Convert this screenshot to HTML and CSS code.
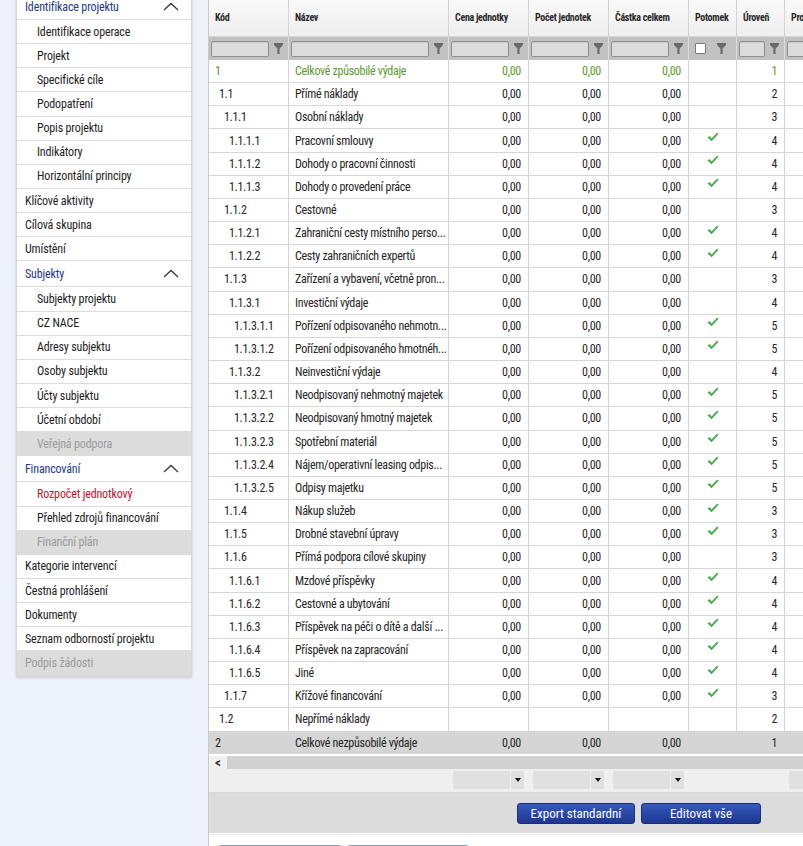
FILE: index.html
```html
<!DOCTYPE html>
<html lang="cs">
<head>
<meta charset="utf-8">
<title>Rozpočet jednotkový</title>
<link rel="stylesheet" href="styles.css">
</head>
<body>
<div class="layout">
  <nav class="side">
    <div class="item head">Identifikace projektu<svg class="chev" viewBox="0 0 16 9"><path d="M1 8L8 1.5L15 8"/></svg></div>
    <div class="item sub">Identifikace operace</div>
    <div class="item sub">Projekt</div>
    <div class="item sub">Specifické cíle</div>
    <div class="item sub">Podopatření</div>
    <div class="item sub">Popis projektu</div>
    <div class="item sub">Indikátory</div>
    <div class="item sub">Horizontální principy</div>
    <div class="item">Klíčové aktivity</div>
    <div class="item">Cílová skupina</div>
    <div class="item">Umístění</div>
    <div class="item head">Subjekty<svg class="chev" viewBox="0 0 16 9"><path d="M1 8L8 1.5L15 8"/></svg></div>
    <div class="item sub">Subjekty projektu</div>
    <div class="item sub">CZ NACE</div>
    <div class="item sub">Adresy subjektu</div>
    <div class="item sub">Osoby subjektu</div>
    <div class="item sub">Účty subjektu</div>
    <div class="item sub">Účetní období</div>
    <div class="item sub disabled">Veřejná podpora</div>
    <div class="item head">Financování<svg class="chev" viewBox="0 0 16 9"><path d="M1 8L8 1.5L15 8"/></svg></div>
    <div class="item sub active">Rozpočet jednotkový</div>
    <div class="item sub">Přehled zdrojů financování</div>
    <div class="item sub disabled">Finanční plán</div>
    <div class="item">Kategorie intervencí</div>
    <div class="item">Čestná prohlášení</div>
    <div class="item">Dokumenty</div>
    <div class="item">Seznam odborností projektu</div>
    <div class="item disabled">Podpis žádosti</div>
  </nav>

  <main class="main">
    <div class="row hdr">
      <div class="c">Kód</div><div class="c">Název</div><div class="c">Cena jednotky</div><div class="c">Počet jednotek</div><div class="c">Částka celkem</div><div class="c">Potomek</div><div class="c">Úroveň</div><div class="c">Pro</div><div class="c"></div>
    </div>
    <div class="row flt">
      <div class="c"><span class="inp"></span><svg class="fun" viewBox="0 0 10 12"><path d="M0 0H10V2.2L6.2 6V12H3.8V6L0 2.2Z"/></svg></div>
      <div class="c"><span class="inp"></span><svg class="fun" viewBox="0 0 10 12"><path d="M0 0H10V2.2L6.2 6V12H3.8V6L0 2.2Z"/></svg></div>
      <div class="c"><span class="inp"></span><svg class="fun" viewBox="0 0 10 12"><path d="M0 0H10V2.2L6.2 6V12H3.8V6L0 2.2Z"/></svg></div>
      <div class="c"><span class="inp"></span><svg class="fun" viewBox="0 0 10 12"><path d="M0 0H10V2.2L6.2 6V12H3.8V6L0 2.2Z"/></svg></div>
      <div class="c"><span class="inp"></span><svg class="fun" viewBox="0 0 10 12"><path d="M0 0H10V2.2L6.2 6V12H3.8V6L0 2.2Z"/></svg></div>
      <div class="c chk"><span class="box"></span><svg class="fun" viewBox="0 0 10 12"><path d="M0 0H10V2.2L6.2 6V12H3.8V6L0 2.2Z"/></svg></div>
      <div class="c"><span class="inp"></span><svg class="fun" viewBox="0 0 10 12"><path d="M0 0H10V2.2L6.2 6V12H3.8V6L0 2.2Z"/></svg></div>
      <div class="c"><span class="inp"></span><svg class="fun" viewBox="0 0 10 12"><path d="M0 0H10V2.2L6.2 6V12H3.8V6L0 2.2Z"/></svg></div>
      <div class="c"></div>
    </div>

    <div class="row d green"><div class="c code l1">1</div><div class="c">Celkové způsobilé výdaje</div><div class="c n">0,00</div><div class="c n">0,00</div><div class="c n">0,00</div><div class="c"></div><div class="c n">1</div><div class="c"></div><div class="c"></div></div>
    <div class="row d"><div class="c code l2">1.1</div><div class="c">Přímé náklady</div><div class="c n">0,00</div><div class="c n">0,00</div><div class="c n">0,00</div><div class="c"></div><div class="c n">2</div><div class="c"></div><div class="c"></div></div>
    <div class="row d"><div class="c code l3">1.1.1</div><div class="c">Osobní náklady</div><div class="c n">0,00</div><div class="c n">0,00</div><div class="c n">0,00</div><div class="c"></div><div class="c n">3</div><div class="c"></div><div class="c"></div></div>
    <div class="row d"><div class="c code l4">1.1.1.1</div><div class="c">Pracovní smlouvy</div><div class="c n">0,00</div><div class="c n">0,00</div><div class="c n">0,00</div><div class="c"><svg class="ok" viewBox="0 0 12 10"><path d="M0.5 5.5L2.5 4L4.6 6.4L10.2 0.5L11.5 1.8L4.6 9.3Z"/></svg></div><div class="c n">4</div><div class="c"></div><div class="c"></div></div>
    <div class="row d"><div class="c code l4">1.1.1.2</div><div class="c">Dohody o pracovní činnosti</div><div class="c n">0,00</div><div class="c n">0,00</div><div class="c n">0,00</div><div class="c"><svg class="ok" viewBox="0 0 12 10"><path d="M0.5 5.5L2.5 4L4.6 6.4L10.2 0.5L11.5 1.8L4.6 9.3Z"/></svg></div><div class="c n">4</div><div class="c"></div><div class="c"></div></div>
    <div class="row d"><div class="c code l4">1.1.1.3</div><div class="c">Dohody o provedení práce</div><div class="c n">0,00</div><div class="c n">0,00</div><div class="c n">0,00</div><div class="c"><svg class="ok" viewBox="0 0 12 10"><path d="M0.5 5.5L2.5 4L4.6 6.4L10.2 0.5L11.5 1.8L4.6 9.3Z"/></svg></div><div class="c n">4</div><div class="c"></div><div class="c"></div></div>
    <div class="row d"><div class="c code l3">1.1.2</div><div class="c">Cestovné</div><div class="c n">0,00</div><div class="c n">0,00</div><div class="c n">0,00</div><div class="c"></div><div class="c n">3</div><div class="c"></div><div class="c"></div></div>
    <div class="row d"><div class="c code l4">1.1.2.1</div><div class="c">Zahraniční cesty místního perso...</div><div class="c n">0,00</div><div class="c n">0,00</div><div class="c n">0,00</div><div class="c"><svg class="ok" viewBox="0 0 12 10"><path d="M0.5 5.5L2.5 4L4.6 6.4L10.2 0.5L11.5 1.8L4.6 9.3Z"/></svg></div><div class="c n">4</div><div class="c"></div><div class="c"></div></div>
    <div class="row d"><div class="c code l4">1.1.2.2</div><div class="c">Cesty zahraničních expertů</div><div class="c n">0,00</div><div class="c n">0,00</div><div class="c n">0,00</div><div class="c"><svg class="ok" viewBox="0 0 12 10"><path d="M0.5 5.5L2.5 4L4.6 6.4L10.2 0.5L11.5 1.8L4.6 9.3Z"/></svg></div><div class="c n">4</div><div class="c"></div><div class="c"></div></div>
    <div class="row d"><div class="c code l3">1.1.3</div><div class="c">Zařízení a vybavení, včetně pron...</div><div class="c n">0,00</div><div class="c n">0,00</div><div class="c n">0,00</div><div class="c"></div><div class="c n">3</div><div class="c"></div><div class="c"></div></div>
    <div class="row d"><div class="c code l4">1.1.3.1</div><div class="c">Investiční výdaje</div><div class="c n">0,00</div><div class="c n">0,00</div><div class="c n">0,00</div><div class="c"></div><div class="c n">4</div><div class="c"></div><div class="c"></div></div>
    <div class="row d"><div class="c code l5">1.1.3.1.1</div><div class="c">Pořízení odpisovaného nehmotn...</div><div class="c n">0,00</div><div class="c n">0,00</div><div class="c n">0,00</div><div class="c"><svg class="ok" viewBox="0 0 12 10"><path d="M0.5 5.5L2.5 4L4.6 6.4L10.2 0.5L11.5 1.8L4.6 9.3Z"/></svg></div><div class="c n">5</div><div class="c"></div><div class="c"></div></div>
    <div class="row d"><div class="c code l5">1.1.3.1.2</div><div class="c">Pořízení odpisovaného hmotnéh...</div><div class="c n">0,00</div><div class="c n">0,00</div><div class="c n">0,00</div><div class="c"><svg class="ok" viewBox="0 0 12 10"><path d="M0.5 5.5L2.5 4L4.6 6.4L10.2 0.5L11.5 1.8L4.6 9.3Z"/></svg></div><div class="c n">5</div><div class="c"></div><div class="c"></div></div>
    <div class="row d"><div class="c code l4">1.1.3.2</div><div class="c">Neinvestiční výdaje</div><div class="c n">0,00</div><div class="c n">0,00</div><div class="c n">0,00</div><div class="c"></div><div class="c n">4</div><div class="c"></div><div class="c"></div></div>
    <div class="row d"><div class="c code l5">1.1.3.2.1</div><div class="c">Neodpisovaný nehmotný majetek</div><div class="c n">0,00</div><div class="c n">0,00</div><div class="c n">0,00</div><div class="c"><svg class="ok" viewBox="0 0 12 10"><path d="M0.5 5.5L2.5 4L4.6 6.4L10.2 0.5L11.5 1.8L4.6 9.3Z"/></svg></div><div class="c n">5</div><div class="c"></div><div class="c"></div></div>
    <div class="row d"><div class="c code l5">1.1.3.2.2</div><div class="c">Neodpisovaný hmotný majetek</div><div class="c n">0,00</div><div class="c n">0,00</div><div class="c n">0,00</div><div class="c"><svg class="ok" viewBox="0 0 12 10"><path d="M0.5 5.5L2.5 4L4.6 6.4L10.2 0.5L11.5 1.8L4.6 9.3Z"/></svg></div><div class="c n">5</div><div class="c"></div><div class="c"></div></div>
    <div class="row d"><div class="c code l5">1.1.3.2.3</div><div class="c">Spotřební materiál</div><div class="c n">0,00</div><div class="c n">0,00</div><div class="c n">0,00</div><div class="c"><svg class="ok" viewBox="0 0 12 10"><path d="M0.5 5.5L2.5 4L4.6 6.4L10.2 0.5L11.5 1.8L4.6 9.3Z"/></svg></div><div class="c n">5</div><div class="c"></div><div class="c"></div></div>
    <div class="row d"><div class="c code l5">1.1.3.2.4</div><div class="c">Nájem/operativní leasing odpis...</div><div class="c n">0,00</div><div class="c n">0,00</div><div class="c n">0,00</div><div class="c"><svg class="ok" viewBox="0 0 12 10"><path d="M0.5 5.5L2.5 4L4.6 6.4L10.2 0.5L11.5 1.8L4.6 9.3Z"/></svg></div><div class="c n">5</div><div class="c"></div><div class="c"></div></div>
    <div class="row d"><div class="c code l5">1.1.3.2.5</div><div class="c">Odpisy majetku</div><div class="c n">0,00</div><div class="c n">0,00</div><div class="c n">0,00</div><div class="c"><svg class="ok" viewBox="0 0 12 10"><path d="M0.5 5.5L2.5 4L4.6 6.4L10.2 0.5L11.5 1.8L4.6 9.3Z"/></svg></div><div class="c n">5</div><div class="c"></div><div class="c"></div></div>
    <div class="row d"><div class="c code l3">1.1.4</div><div class="c">Nákup služeb</div><div class="c n">0,00</div><div class="c n">0,00</div><div class="c n">0,00</div><div class="c"><svg class="ok" viewBox="0 0 12 10"><path d="M0.5 5.5L2.5 4L4.6 6.4L10.2 0.5L11.5 1.8L4.6 9.3Z"/></svg></div><div class="c n">3</div><div class="c"></div><div class="c"></div></div>
    <div class="row d"><div class="c code l3">1.1.5</div><div class="c">Drobné stavební úpravy</div><div class="c n">0,00</div><div class="c n">0,00</div><div class="c n">0,00</div><div class="c"><svg class="ok" viewBox="0 0 12 10"><path d="M0.5 5.5L2.5 4L4.6 6.4L10.2 0.5L11.5 1.8L4.6 9.3Z"/></svg></div><div class="c n">3</div><div class="c"></div><div class="c"></div></div>
    <div class="row d"><div class="c code l3">1.1.6</div><div class="c">Přímá podpora cílové skupiny</div><div class="c n">0,00</div><div class="c n">0,00</div><div class="c n">0,00</div><div class="c"></div><div class="c n">3</div><div class="c"></div><div class="c"></div></div>
    <div class="row d"><div class="c code l4">1.1.6.1</div><div class="c">Mzdové příspěvky</div><div class="c n">0,00</div><div class="c n">0,00</div><div class="c n">0,00</div><div class="c"><svg class="ok" viewBox="0 0 12 10"><path d="M0.5 5.5L2.5 4L4.6 6.4L10.2 0.5L11.5 1.8L4.6 9.3Z"/></svg></div><div class="c n">4</div><div class="c"></div><div class="c"></div></div>
    <div class="row d"><div class="c code l4">1.1.6.2</div><div class="c">Cestovné a ubytování</div><div class="c n">0,00</div><div class="c n">0,00</div><div class="c n">0,00</div><div class="c"><svg class="ok" viewBox="0 0 12 10"><path d="M0.5 5.5L2.5 4L4.6 6.4L10.2 0.5L11.5 1.8L4.6 9.3Z"/></svg></div><div class="c n">4</div><div class="c"></div><div class="c"></div></div>
    <div class="row d"><div class="c code l4">1.1.6.3</div><div class="c">Příspěvek na péči o dítě a další ...</div><div class="c n">0,00</div><div class="c n">0,00</div><div class="c n">0,00</div><div class="c"><svg class="ok" viewBox="0 0 12 10"><path d="M0.5 5.5L2.5 4L4.6 6.4L10.2 0.5L11.5 1.8L4.6 9.3Z"/></svg></div><div class="c n">4</div><div class="c"></div><div class="c"></div></div>
    <div class="row d"><div class="c code l4">1.1.6.4</div><div class="c">Příspěvek na zapracování</div><div class="c n">0,00</div><div class="c n">0,00</div><div class="c n">0,00</div><div class="c"><svg class="ok" viewBox="0 0 12 10"><path d="M0.5 5.5L2.5 4L4.6 6.4L10.2 0.5L11.5 1.8L4.6 9.3Z"/></svg></div><div class="c n">4</div><div class="c"></div><div class="c"></div></div>
    <div class="row d"><div class="c code l4">1.1.6.5</div><div class="c">Jiné</div><div class="c n">0,00</div><div class="c n">0,00</div><div class="c n">0,00</div><div class="c"><svg class="ok" viewBox="0 0 12 10"><path d="M0.5 5.5L2.5 4L4.6 6.4L10.2 0.5L11.5 1.8L4.6 9.3Z"/></svg></div><div class="c n">4</div><div class="c"></div><div class="c"></div></div>
    <div class="row d"><div class="c code l3">1.1.7</div><div class="c">Křížové financování</div><div class="c n">0,00</div><div class="c n">0,00</div><div class="c n">0,00</div><div class="c"><svg class="ok" viewBox="0 0 12 10"><path d="M0.5 5.5L2.5 4L4.6 6.4L10.2 0.5L11.5 1.8L4.6 9.3Z"/></svg></div><div class="c n">3</div><div class="c"></div><div class="c"></div></div>
    <div class="row d"><div class="c code l2">1.2</div><div class="c">Nepřímé náklady</div><div class="c n"></div><div class="c n"></div><div class="c n"></div><div class="c"></div><div class="c n">2</div><div class="c"></div><div class="c"></div></div>
    <div class="row d gray"><div class="c code l1">2</div><div class="c">Celkové nezpůsobilé výdaje</div><div class="c n">0,00</div><div class="c n">0,00</div><div class="c n">0,00</div><div class="c"></div><div class="c n">1</div><div class="c"></div><div class="c"></div></div>

    <div class="scroll"><span class="arrow">&lt;</span><span class="track"></span></div>

    <div class="row pager">
      <div class="c"></div><div class="c"></div>
      <div class="c"><span class="sel"></span><span class="btn-dd"><svg viewBox="0 0 6 4"><path d="M0 0H6L3 4Z"/></svg></span></div>
      <div class="c"><span class="sel"></span><span class="btn-dd"><svg viewBox="0 0 6 4"><path d="M0 0H6L3 4Z"/></svg></span></div>
      <div class="c"><span class="sel"></span><span class="btn-dd"><svg viewBox="0 0 6 4"><path d="M0 0H6L3 4Z"/></svg></span></div>
      <div class="c"></div><div class="c"></div>
      <div class="c"><span class="sel"></span><span class="btn-dd"><svg viewBox="0 0 6 4"><path d="M0 0H6L3 4Z"/></svg></span></div>
      <div class="c"></div>
    </div>

    <div class="actions">
      <button class="btn export">Export standardní</button>
      <button class="btn edit">Editovat vše</button>
    </div>

    <div class="bottom">
      <span class="gbtn one"></span>
      <span class="gbtn two"></span>
    </div>
  </main>
</div>
</body>
</html>
```

FILE: styles.css
```css
html, body {
  margin: 0;
  padding: 0;
}
body {
  width: 803px;
  height: 846px;
  overflow: hidden;
  background: #eef2fa;
  font-family: "Roboto Condensed", "Arial Narrow", "Liberation Sans Narrow", "Roboto", "Open Sans", sans-serif;
  font-stretch: 75%;
  font-size: 12px;
  color: #222;
}
.layout {
  display: flex;
  align-items: flex-start;
  gap: 16px;
  padding-left: 16px;
}

/* Sidebar */
.side {
  flex: none;
  width: 176px;
  box-sizing: border-box;
  margin-top: -7px;
  background: #fff;
  border: 1px solid #d6d6d6;
  box-shadow: 0 1px 3px rgba(0, 0, 0, 0.15);
}
.item {
  height: 24.15px;
  box-sizing: border-box;
  display: flex;
  align-items: center;
  padding-left: 8px;
  padding-right: 12px;
  border-bottom: 1px solid #dcdcdc;
  font-size: 12px;
  letter-spacing: -0.15px;
  color: #1e1e1e;
  white-space: nowrap;
}
.item:last-child { border-bottom: none; }
.item.sub { padding-left: 20px; }
.item.head {
  height: 26px;
  color: #23398c;
  justify-content: space-between;
}
.item.disabled {
  background: #dcdcdc;
  color: #9b9b9b;
}
.item.active { color: #c8102e; }
.chev {
  width: 16px;
  height: 9px;
  fill: none;
  stroke: #3a3a3a;
  stroke-width: 1.3;
}

/* Main grid */
.main {
  flex: none;
  width: 860px;
  background: #fff;
  border-left: 1px solid #c9c9c9;
}
.row {
  display: grid;
  grid-template-columns: 80px 160px 80px 80px 80px 48px 48px 80px 1fr;
  box-sizing: border-box;
}
.c {
  box-sizing: border-box;
  border-right: 1px solid #d3d3d3;
  display: flex;
  align-items: center;
  padding-left: 6px;
  white-space: nowrap;
  overflow: hidden;
}
.hdr {
  height: 37px;
  background: linear-gradient(#f9f9f9, #efefef);
  border-bottom: 1px solid #d3d3d3;
}
.hdr .c {
  font-weight: bold;
  font-size: 10px;
  letter-spacing: -0.3px;
  color: #2a2a2a;
  padding-bottom: 1px;
}
.flt {
  height: 23px;
  background: #c1c1c1;
}
.flt .c {
  border-right-color: #dcdcdc;
  padding-left: 2px;
  gap: 0;
}
.inp {
  flex: 1;
  height: 16px;
  box-sizing: border-box;
  background: #dcdcdc;
  border: 1px solid #8f8f8f;
  border-radius: 2px;
  box-shadow: inset 0 1px 1px rgba(0,0,0,0.08);
}
.fun {
  flex: none;
  width: 9px;
  height: 11px;
  margin: 0 5px 0 5px;
  fill: #6a6a6a;
}
.flt .chk { justify-content: center; padding-left: 0; gap: 3px; }
.box {
  width: 9px;
  height: 9px;
  background: #fff;
  border: 1px solid #7a7a7a;
  border-radius: 1px;
  margin-right: 3px;
}

.d {
  height: 23.17px;
  border-bottom: 1px solid #d6d6d6;
}
.d .c {
  font-size: 12px;
  letter-spacing: -0.3px;
  color: #262626;
}
.d .n {
  justify-content: flex-end;
  padding-right: 7px;
}
.code.l1 { padding-left: 6px; }
.code.l2 { padding-left: 10px; }
.code.l3 { padding-left: 15px; }
.code.l4 { padding-left: 20px; }
.code.l5 { padding-left: 25px; }
.d.green .c { color: #5c9a2c; }
.gray { background: #d5d5d5; border-bottom-color: #ffffff; }
.gray .c { border-right-color: #d5d5d5; }
.ok {
  width: 12px;
  height: 10px;
  fill: #43ad4a;
  margin-left: 12px;
  margin-top: -7px;
}

.scroll {
  display: flex;
  height: 13px;
  border-top: 1px solid #fff;
}
.arrow {
  width: 18px;
  background: #f1f1f1;
  font-size: 13px;
  line-height: 13px;
  color: #333;
  padding-left: 6px;
  box-sizing: border-box;
  font-weight: bold;
}
.track { flex: 1; background: #d0d0d0; }

.pager {
  height: 24px;
  background: #efefef;
  border-bottom: 1px solid #d9d9d9;
}
.pager .c {
  border-right: none;
  padding-left: 4px;
  gap: 1px;
}
.sel {
  width: 57px;
  height: 18px;
  background: #e0e0e0;
  border-radius: 2px;
}
.btn-dd {
  width: 13px;
  height: 18px;
  background: #e0e0e0;
  border-radius: 2px;
  display: flex;
  align-items: center;
  justify-content: center;
}
.btn-dd svg { width: 6px; height: 4px; fill: #111; }

.actions {
  height: 40px;
  background: #dcdcdc;
  display: flex;
  align-items: center;
  justify-content: center;
  gap: 6px;
  box-sizing: border-box;
  padding-top: 1px;
}
.btn {
  height: 21px;
  border: 1px solid #1b2f78;
  border-radius: 3px;
  background: linear-gradient(#3559bd, #1d3791);
  color: #fff;
  font-family: inherit;
  font-stretch: inherit;
  font-size: 13px;
  padding: 0;
  line-height: 19px;
}
.btn.export { width: 118px; }
.btn.edit { width: 120px; }

.bottom {
  display: flex;
  gap: 5px;
  padding: 10px 0 0 9px;
  border-top: 1px solid #e6e6e6;
  margin-top: 1px;
  height: 40px;
}
.gbtn {
  height: 22px;
  border: 1px solid #8d9ab5;
  border-radius: 3px;
  background: #f4f4f4;
}
.gbtn.one { width: 122px; }
.gbtn.two { width: 120px; }
```
